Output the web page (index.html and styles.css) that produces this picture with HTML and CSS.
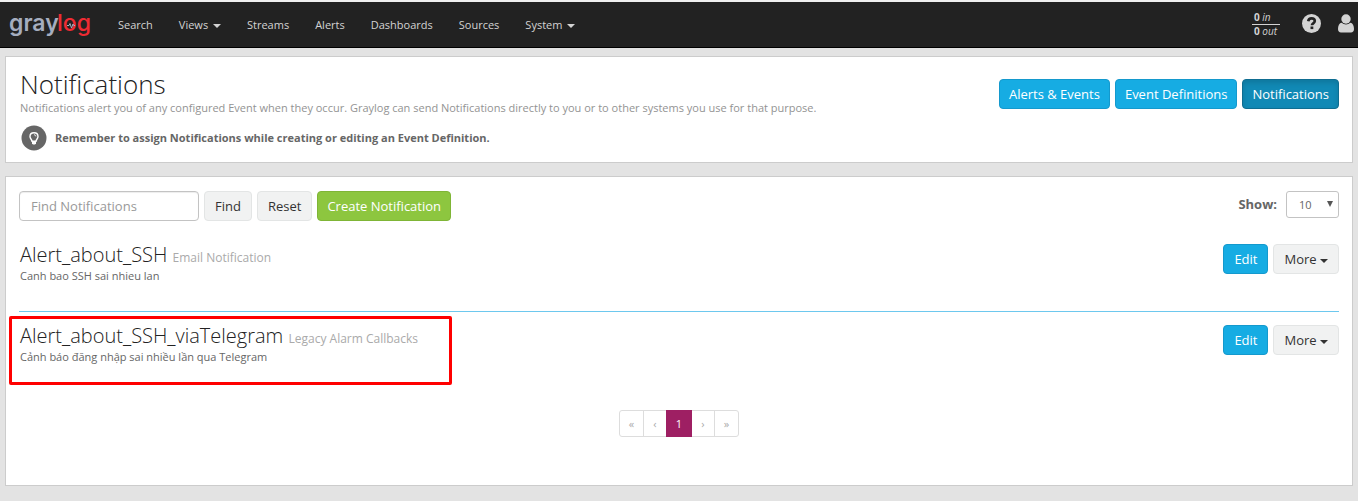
FILE: index.html
```html
<!DOCTYPE html>
<html lang="en">
<head>
<meta charset="utf-8">
<title>Notifications</title>
<link rel="stylesheet" href="styles.css">
</head>
<body>
<header class="navbar">
  <a class="brand" href="#" aria-label="graylog home">
    <svg width="86" height="34" viewBox="0 0 86 34">
      <text class="logo logo-gray" x="0" y="23">gray</text>
      <text class="logo logo-red" x="48" y="23">log</text>
      <path d="M58 17.500h2l1-2 1.500 4.500 1.500-4 .8 1.500H66" fill="none" stroke="#a5adbf" stroke-width="1"/>
    </svg>
  </a>
  <nav class="menu">
    <a href="#">Search</a>
    <a href="#">Views <span class="caret"></span></a>
    <a href="#">Streams</a>
    <a href="#">Alerts</a>
    <a href="#">Dashboards</a>
    <a href="#">Sources</a>
    <a href="#">System <span class="caret"></span></a>
  </nav>
  <div class="tools">
    <a class="throughput" href="#">
      <span class="rate"><b>0</b> <i>in</i></span>
      <span class="rate"><b>0</b> <i>out</i></span>
    </a>
    <a class="tool" href="#" aria-label="Help">
      <svg width="20" height="20" viewBox="0 0 20 20"><circle cx="9.500" cy="8.500" r="9.500" fill="#d3d3d3"/><path d="M6.200 6.200C6.500 4.200 7.800 3.400 9.500 3.400c1.900 0 3.300 1.100 3.300 2.700 0 2.300-2.900 2.300-2.900 4.200" fill="none" stroke="#222" stroke-width="2.600"/><rect x="8.500" y="11.500" width="2.800" height="2.600" fill="#222"/></svg>
    </a>
    <a class="tool" href="#" aria-label="User">
      <svg width="16" height="20" viewBox="0 0 16 20"><circle cx="8" cy="4" r="4.700" fill="#d3d3d3"/><path d="M3.800 7.700C1.200 8 0 10.500 0 14c0 2.200 1.200 3.500 3 3.500h10c1.800 0 3-1.300 3-3.500 0-3.500-1.200-6-3.800-6.300-1.200 1.100-2.600 1.700-4.200 1.700s-3-.6-4.200-1.700z" fill="#d3d3d3"/></svg>
    </a>
  </div>
</header>
<main class="page">
  <section class="panel intro">
    <div>
      <h1>Notifications</h1>
      <p class="lead">Notifications alert you of any configured Event when they occur. Graylog can send Notifications directly to you or to other systems you use for that purpose.</p>
      <p class="tip">
        <svg width="26" height="26" viewBox="0 0 26 26"><circle cx="13" cy="13" r="12.500" fill="#666"/><path d="M11 16.300c0-1.800-2-2.500-2-4.800 0-2.200 1.700-3.700 4-3.700s4 1.500 4 3.700c0 2.300-2 3-2 4.800z" fill="none" stroke="#fff" stroke-width="1.400"/><path d="M13 9.800c1.200 0 1.900.6 1.900 1.600" fill="none" stroke="#fff"/><path d="M11 16h4v2.500l-1 1h-2l-1-1z" fill="#fff"/></svg>
        <strong>Remember to assign Notifications while creating or editing an Event Definition.</strong>
      </p>
    </div>
    <div class="switcher">
      <button class="btn info" type="button">Alerts &amp; Events</button>
      <button class="btn info" type="button">Event Definitions</button>
      <button class="btn info active" type="button">Notifications</button>
    </div>
  </section>
  <section class="panel listing">
    <div class="toolbar">
      <form class="search">
        <input class="query" type="text" placeholder="Find Notifications" aria-label="Find Notifications">
        <button class="btn" type="button">Find</button>
        <button class="btn" type="reset">Reset</button>
        <button class="btn success" type="button">Create Notification</button>
      </form>
      <div class="size">
        <label for="page-size">Show:</label>
        <span class="select-wrap">
          <select id="page-size"><option>10</option><option>25</option><option>50</option></select>
        </span>
      </div>
    </div>
    <ul class="entries">
      <li class="entry">
        <div class="summary">
          <h2>Alert_about_SSH <small>Email Notification</small></h2>
          <p class="description">Canh bao SSH sai nhieu lan</p>
        </div>
        <div class="actions">
          <button class="btn info" type="button">Edit</button>
          <button class="btn" type="button">More <span class="caret"></span></button>
        </div>
      </li>
      <li class="entry">
        <div class="summary marked">
          <h2>Alert_about_SSH_viaTelegram <small>Legacy Alarm Callbacks</small></h2>
          <p class="description" lang="vi">Cảnh báo đăng nhập sai nhiều lần qua Telegram</p>
        </div>
        <div class="actions">
          <button class="btn info" type="button">Edit</button>
          <button class="btn" type="button">More <span class="caret"></span></button>
        </div>
      </li>
    </ul>
    <nav class="pagination" aria-label="Pages">
      <a href="#">«</a><a href="#">‹</a><a class="current" href="#">1</a><a href="#">›</a><a href="#">»</a>
    </nav>
  </section>
</main>
</body>
</html>
```

FILE: styles.css
```css
* { box-sizing: border-box; }
body {
  margin: 0;
  background: #e3e3e3;
  color: #666;
  font: 11px/16px "Open Sans", "Noto Sans", sans-serif;
}
h1, h2, p, ul { margin: 0; padding: 0; }
a { color: inherit; text-decoration: none; }
svg { display: block; overflow: visible; }

.navbar {
  display: flex;
  align-items: center;
  height: 48px;
  padding: 0 4px 0 9px;
  border-top: 2px solid #f0f0f0;
  border-bottom: 1px solid #000;
  background: #222;
  color: #d3d3d3;
}
.logo { font: 600 23px Inter, sans-serif; }
.logo-gray { fill: #a5adbf; }
.logo-red { fill: #ef2b33; font-weight: 500; }
.menu { display: flex; margin-left: 10px; }
.menu a { padding: 0 13px; }
.caret {
  display: inline-block;
  margin-left: 2px;
  vertical-align: middle;
  border-top: 4px solid;
  border-left: 4px solid transparent;
  border-right: 4px solid transparent;
}
.tools { display: flex; align-items: center; margin-left: auto; }
.throughput { width: 28px; margin-right: 22px; font-size: 10px; line-height: 13px; }
.rate { display: block; padding-left: 2px; white-space: nowrap; }
.rate + .rate { border-top: 1px solid #d3d3d3; }
.tool + .tool { margin-left: 16px; }

.page { padding: 8px 5px 15px; }
.panel { padding: 14px 13px; border: 1px solid #ccc; background: #fff; }
.intro { display: flex; justify-content: space-between; min-height: 107px; padding-top: 12px; padding-bottom: 10px; }
h1 { color: #222; font-size: 26px; font-weight: 300; line-height: 30px; padding-left: 1px; }
.lead { padding-left: 1px; color: #939393; line-height: 18px; }
.tip { display: flex; align-items: center; gap: 8px; margin-top: 8px; padding-left: 2px; }
.switcher { display: flex; gap: 5px; padding-top: 10px; }

.btn {
  height: 30px;
  padding: 0 10px;
  border: 1px solid #e3e5e5;
  border-radius: 4px;
  background: #f1f2f2;
  color: #333;
  font: inherit;
  font-size: 13px;
  white-space: nowrap;
}
.btn .caret { margin-left: 0; }
.info { border-color: #1499cd; background: #16ace3; color: #fff; }
.info.active { border-color: #0f6d91; background: #1189b5; box-shadow: inset 0 3px 5px rgba(0, 0, 0, .125); }
.success { border-color: #7fb536; background: #8dc63f; color: #fff; }
.switcher .btn, .success { padding: 0 9px; }

.listing { margin-top: 13px; min-height: 310px; }
.toolbar { display: flex; justify-content: space-between; }
.search { display: flex; gap: 5px; }
.query {
  width: 180px;
  height: 30px;
  padding: 0 11px;
  border: 1px solid #c3c3c3;
  border-radius: 4px;
  box-shadow: inset 0 1px 1px rgba(0, 0, 0, .075);
  color: #666;
  font: inherit;
  font-size: 13px;
}
.query::placeholder { color: #999; }
.size { display: flex; gap: 9px; }
.size label { font-size: 13px; font-weight: 700; line-height: 26px; }
.select-wrap { position: relative; height: 27px; }
.select-wrap::after {
  content: "";
  position: absolute;
  top: 10px;
  right: 6px;
  border-top: 6px solid #555;
  border-left: 3px solid transparent;
  border-right: 3px solid transparent;
  pointer-events: none;
}
.size select {
  width: 53px;
  height: 27px;
  padding: 0 12px;
  appearance: none;
  border: 1px solid #c3c3c3;
  border-radius: 3px;
  background: #fff;
  color: #666;
  font: inherit;
}

.entries { padding-top: 10px; list-style: none; }
.entry {
  display: flex;
  justify-content: space-between;
  padding: 13px 0 24px;
  border-bottom: 1px solid #6dc8ee;
}
.entry:last-child { border-color: transparent; }
.summary { padding-left: 1px; }
h2 { color: #222; font-size: 20px; font-weight: 300; line-height: 21px; }
small { color: #aaa; font-size: 12px; font-weight: 400; line-height: 12px; }
.description { line-height: 22px; }
.actions { display: flex; gap: 5px; }
.marked { position: relative; }
.marked::after {
  content: "";
  position: absolute;
  top: -9px;
  right: -34px;
  bottom: -17px;
  left: -10px;
  border: 3px solid #f00;
  border-radius: 2px;
  pointer-events: none;
}

.pagination { display: flex; justify-content: center; margin-top: 17px; }
.pagination a {
  min-width: 24px;
  height: 27px;
  border: 1px solid #ddd;
  color: #aaa;
  line-height: 25px;
  text-align: center;
}
.pagination a + a { margin-left: -1px; }
.pagination a:first-child { min-width: 25px; border-radius: 3px 0 0 3px; }
.pagination a:last-child { min-width: 25px; border-radius: 0 3px 3px 0; }
.pagination .current { position: relative; min-width: 26px; border-color: #9e1f63; background: #9e1f63; color: #fff; }
```
